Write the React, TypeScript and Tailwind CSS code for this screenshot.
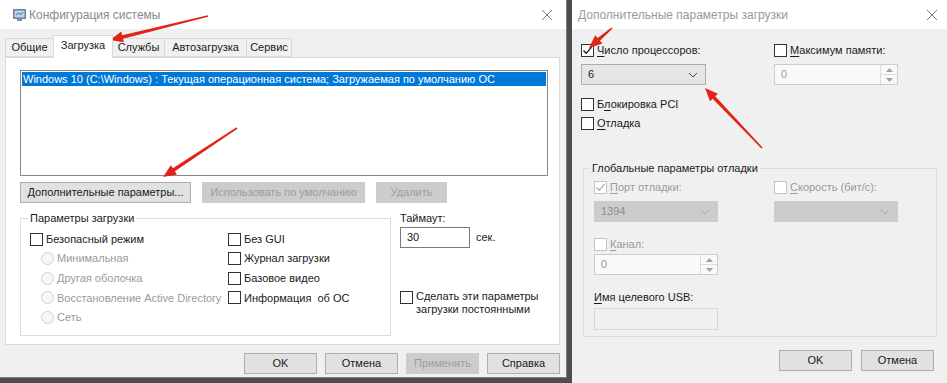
import React from "react";

const FONT = { fontFamily: '"Liberation Sans", Arial, sans-serif' };

// small access-key underline helper
const U = ({ children }: { children: React.ReactNode }) => (
  <span className="underline underline-offset-2">{children}</span>
);

const Check = ({ color = "#1a1a1a" }: { color?: string }) => (
  <svg width="11" height="11" viewBox="0 0 11 11">
    <path d="M1.5 5.5 L4.2 8.3 L9.6 2" fill="none" stroke={color} strokeWidth="1.3" />
  </svg>
);

const Box = ({ checked, disabled }: { checked?: boolean; disabled?: boolean }) => (
  <span
    className={
      disabled
        ? "w-[13px] h-[13px] shrink-0 border border-[#c4c4c4] bg-white flex items-center justify-center"
        : "w-[13px] h-[13px] shrink-0 border border-[#333333] bg-white flex items-center justify-center"
    }
  >
    {checked && <Check color={disabled ? "#b0b0b0" : "#1a1a1a"} />}
  </span>
);

const Radio = () => (
  <span className="w-[13px] h-[13px] shrink-0 rounded-full border border-[#cfcfcf] bg-[#f7f7f7]" />
);

const Chevron = ({ color }: { color: string }) => (
  <svg width="10" height="6" viewBox="0 0 10 6">
    <path d="M1 1 L5 5 L9 1" fill="none" stroke={color} strokeWidth="1" />
  </svg>
);

const Combo = ({ value, disabled }: { value?: string; disabled?: boolean }) => (
  <div
    className={
      disabled
        ? "w-[124px] h-[21px] border border-[#cccccc] bg-[#cccccc] flex items-center justify-between pl-[6px] pr-[7px] text-[#8d8d8d]"
        : "w-[125px] h-[21px] border border-[#adadad] bg-[#e5e5e5] flex items-center justify-between pl-[6px] pr-[7px] text-[#1a1a1a]"
    }
  >
    <span>{value}</span>
    <Chevron color={disabled ? "#a8a8a8" : "#444444"} />
  </div>
);

const Spin = ({ value }: { value?: string }) => (
  <div className="w-[124px] h-[21px] border border-[#cccccc] bg-[#f9f9f9] flex items-stretch text-[#9a9a9a]">
    <span className="flex-1 pl-[6px] flex items-center">{value}</span>
    <div className="w-[17px] border-l border-[#dcdcdc] flex flex-col">
      <div className="flex-1 flex items-center justify-center border-b border-[#dcdcdc]">
        <svg width="7" height="4" viewBox="0 0 7 4"><path d="M0 4 L3.5 0 L7 4Z" fill="#a0a0a0" /></svg>
      </div>
      <div className="flex-1 flex items-center justify-center">
        <svg width="7" height="4" viewBox="0 0 7 4"><path d="M0 0 L3.5 4 L7 0Z" fill="#a0a0a0" /></svg>
      </div>
    </div>
  </div>
);

const Btn = ({
  children,
  disabled,
  w = "w-[73px]",
}: {
  children: React.ReactNode;
  disabled?: boolean;
  w?: string;
}) => (
  <div
    className={
      disabled
        ? `${w} h-[21px] border border-[#cccccc] bg-[#cccccc] text-[#9c9c9c] flex items-center justify-center`
        : `${w} h-[21px] border border-[#adadad] bg-[#e1e1e1] text-[#1a1a1a] flex items-center justify-center`
    }
  >
    {children}
  </div>
);

const CloseX = () => (
  <svg width="12" height="12" viewBox="0 0 12 12">
    <path d="M1 1 L11 11 M11 1 L1 11" stroke="#7a7a7a" strokeWidth="1" />
  </svg>
);

const MsIcon = () => (
  <svg width="16" height="16" viewBox="0 0 16 16">
    <rect x="1" y="2" width="13" height="10" rx="1" fill="#6f7f96" />
    <rect x="2.5" y="3.5" width="10" height="7" fill="#bcd3ee" />
    <path d="M4 8 L6.5 6 L9 7.5 L11 5" stroke="#3d6fb0" strokeWidth="1" fill="none" />
    <rect x="5" y="12" width="5" height="2" fill="#8390a3" />
  </svg>
);

const Row = ({ children, className = "" }: { children: React.ReactNode; className?: string }) => (
  <div className={`flex items-center gap-[3px] h-[14px] ${className}`}>{children}</div>
);

// annotation arrow, tapered shaft + head
const Arrow = ({ x1, y1, x2, y2 }: { x1: number; y1: number; x2: number; y2: number }) => {
  const a = Math.atan2(y2 - y1, x2 - x1);
  const c = Math.cos(a);
  const s = Math.sin(a);
  const L = 13;
  const bx = x2 - L * c;
  const by = y2 - L * s;
  const t = 0.8;
  const w = 1.8;
  const hw = 5.5;
  const pts = [
    [x1 + t * s, y1 - t * c],
    [bx + w * s, by - w * c],
    [bx + hw * s, by - hw * c],
    [x2, y2],
    [bx - hw * s, by + hw * c],
    [bx - w * s, by + w * c],
    [x1 - t * s, y1 + t * c],
  ]
    .map((p) => p.join(","))
    .join(" ");
  return <polygon points={pts} fill="#e2231a" />;
};

const ConfigWindow = () => (
  <div className="w-[567px] h-[378px] shrink-0 bg-[#f0f0f0] flex flex-col border-r border-b border-[#7d7d7d]">
    <div className="h-[29px] bg-white flex items-center pl-[12px] pr-[13px]">
      <MsIcon />
      <span className="ml-[1px] text-[12px] text-[#8a8a8a]">Конфигурация системы</span>
      <span className="ml-auto">
        <CloseX />
      </span>
    </div>

    {/* tabs */}
    <div className="pl-[5px] pt-[5px] flex items-end h-[28px]">
      <div className="h-[19px] w-[48px] border border-[#d9d9d9] border-r-0 bg-[#f0f0f0] flex items-center justify-center">Общие</div>
      <div className="h-[23px] w-[60px] border border-[#d9d9d9] border-b-0 bg-white flex items-center justify-center mb-[-1px] relative z-10 pb-[3px]">
        Загрузка
      </div>
      <div className="h-[19px] w-[52px] border border-[#d9d9d9] border-l-0 bg-[#f0f0f0] flex items-center justify-center">Службы</div>
      <div className="h-[19px] w-[82px] border border-[#d9d9d9] border-l-0 bg-[#f0f0f0] flex items-center justify-center">Автозагрузка</div>
      <div className="h-[19px] w-[45px] border border-[#d9d9d9] border-l-0 bg-[#f0f0f0] flex items-center justify-center">Сервис</div>
    </div>

    <div className="ml-[5px] w-[555px] h-[288px] border border-[#d9d9d9] bg-white pl-[14px] pt-[12px]">
      <div className="w-[528px] h-[106px] border border-[#828790] bg-white p-[1px]">
        <div className="h-[14px] bg-[#0078d7] text-white flex items-center pl-[1px]">
          Windows 10 (C:\Windows) : Текущая операционная система; Загружаемая по умолчанию ОС
        </div>
      </div>

      <div className="flex gap-[11px] mt-[6px]">
        <Btn w="w-[171px]">Дополнительные параметры...</Btn>
        <Btn w="w-[163px]" disabled>
          Использовать по умолчанию
        </Btn>
        <Btn w="w-[71px]" disabled>
          Удалить
        </Btn>
      </div>

      <div className="flex mt-[8px]">
        <fieldset className="w-[371px] h-[125px] border border-[#dcdcdc] pl-[9px] m-0">
          <legend className="px-[2px] ml-[-2px] leading-[14px]">Параметры загрузки</legend>
          <div className="flex pt-[7px]">
            <div className="w-[198px] flex flex-col gap-[5.6px]">
              <Row>
                <Box />
                <span>Безопасный режим</span>
              </Row>
              <Row className="pl-[11px] text-[#9a9a9a]">
                <Radio />
                <span>Минимальная</span>
              </Row>
              <Row className="pl-[11px] text-[#9a9a9a]">
                <Radio />
                <span>Другая оболочка</span>
              </Row>
              <Row className="pl-[11px] text-[#9a9a9a]">
                <Radio />
                <span>Восстановление Active Directory</span>
              </Row>
              <Row className="pl-[11px] text-[#9a9a9a]">
                <Radio />
                <span>Сеть</span>
              </Row>
            </div>
            <div className="flex flex-col gap-[5.6px]">
              <Row>
                <Box />
                <span>Без GUI</span>
              </Row>
              <Row>
                <Box />
                <span>Журнал загрузки</span>
              </Row>
              <Row>
                <Box />
                <span>Базовое видео</span>
              </Row>
              <Row>
                <Box />
                <span className="whitespace-pre">Информация  об ОС</span>
              </Row>
            </div>
          </div>
        </fieldset>

        <div className="ml-[9px] flex flex-col">
          <span className="leading-[14px]">Таймаут:</span>
          <div className="flex items-center mt-[2px]">
            <div className="w-[70px] h-[21px] border border-[#7a7a7a] bg-white pl-[6px] flex items-center">30</div>
            <span className="ml-[6px]">сек.</span>
          </div>
          <div className="flex mt-[42px] gap-[3px]">
            <span className="mt-[1px]">
              <Box />
            </span>
            <div className="flex flex-col leading-[13px]">
              <span>Сделать эти параметры</span>
              <span>загрузки постоянными</span>
            </div>
          </div>
        </div>
      </div>
    </div>

    <div className="flex justify-end gap-[8px] pr-[6px] mt-[8px]">
      <Btn>OK</Btn>
      <Btn>Отмена</Btn>
      <Btn disabled>Применить</Btn>
      <Btn>Справка</Btn>
    </div>
  </div>
);

const AdvancedWindow = () => (
  <div className="w-[375px] h-[383px] ml-[5px] bg-[#f0f0f0] flex flex-col">
    <div className="h-[29px] bg-white flex items-center pl-[6px] pr-[9px]">
      <span className="text-[12px] text-[#9a9a9a]">Дополнительные параметры загрузки</span>
      <span className="ml-auto">
        <CloseX />
      </span>
    </div>

    <div className="pl-[9px] pt-[14px] grid grid-cols-[193px_1fr]">
      <div className="flex flex-col">
        <Row>
          <Box checked />
          <span>
            <U>Ч</U>исло процессоров:
          </span>
        </Row>
        <div className="mt-[7px]">
          <Combo value="6" />
        </div>
        <Row className="mt-[12px]">
          <Box />
          <span>
            Б<U>л</U>окировка PCI
          </span>
        </Row>
        <Row className="mt-[5px]">
          <Box />
          <span>
            <U>О</U>тладка
          </span>
        </Row>
      </div>
      <div className="flex flex-col">
        <Row>
          <Box />
          <span>
            <U>М</U>аксимум памяти:
          </span>
        </Row>
        <div className="mt-[7px]">
          <Spin value="0" />
        </div>
      </div>
    </div>

    <fieldset className="ml-[11px] mt-[31px] w-[354px] h-[176px] border border-[#dcdcdc] pl-[10px] m-0">
      <legend className="px-[2px] ml-[-4px] leading-[14px]">Глобальные параметры отладки</legend>
      <div className="grid grid-cols-[180px_1fr] pt-[5px]">
        <div className="flex flex-col">
          <Row className="text-[#9a9a9a]">
            <Box checked disabled />
            <span>
              <U>П</U>орт отладки:
            </span>
          </Row>
          <div className="mt-[7px]">
            <Combo value="1394" disabled />
          </div>
        </div>
        <div className="flex flex-col">
          <Row className="text-[#9a9a9a]">
            <Box disabled />
            <span>
              <U>С</U>корость (бит/с):
            </span>
          </Row>
          <div className="mt-[7px]">
            <Combo disabled />
          </div>
        </div>
      </div>
      <Row className="mt-[15px] text-[#9a9a9a]">
        <Box disabled />
        <span>
          <U>К</U>анал:
        </span>
      </Row>
      <div className="mt-[3px]">
        <Spin value="0" />
      </div>
      <div className="mt-[15px] leading-[14px]">
        <U>И</U>мя целевого USB:
      </div>
      <div className="mt-[4px] w-[124px] h-[22px] border border-[#d6d6d6] bg-[#f0f0f0]" />
    </fieldset>

    <div className="flex justify-end gap-[9px] pr-[13px] mt-[13px]">
      <Btn>OK</Btn>
      <Btn>Отмена</Btn>
    </div>
  </div>
);

export default function App() {
  return (
    <div
      className="relative w-[947px] h-[383px] overflow-hidden bg-[#4d4d4d] flex text-[11px] text-[#1a1a1a] whitespace-nowrap"
      style={FONT}
    >
      <ConfigWindow />
      <AdvancedWindow />
      <svg className="absolute inset-0 pointer-events-none" width="947" height="383">
        <Arrow x1={208} y1={16} x2={110} y2={40} />
        <Arrow x1={237} y1={128} x2={163} y2={177} />
        <Arrow x1={612} y1={28} x2={589} y2={48} />
        <Arrow x1={762} y1={148} x2={705} y2={88} />
      </svg>
    </div>
  );
}
